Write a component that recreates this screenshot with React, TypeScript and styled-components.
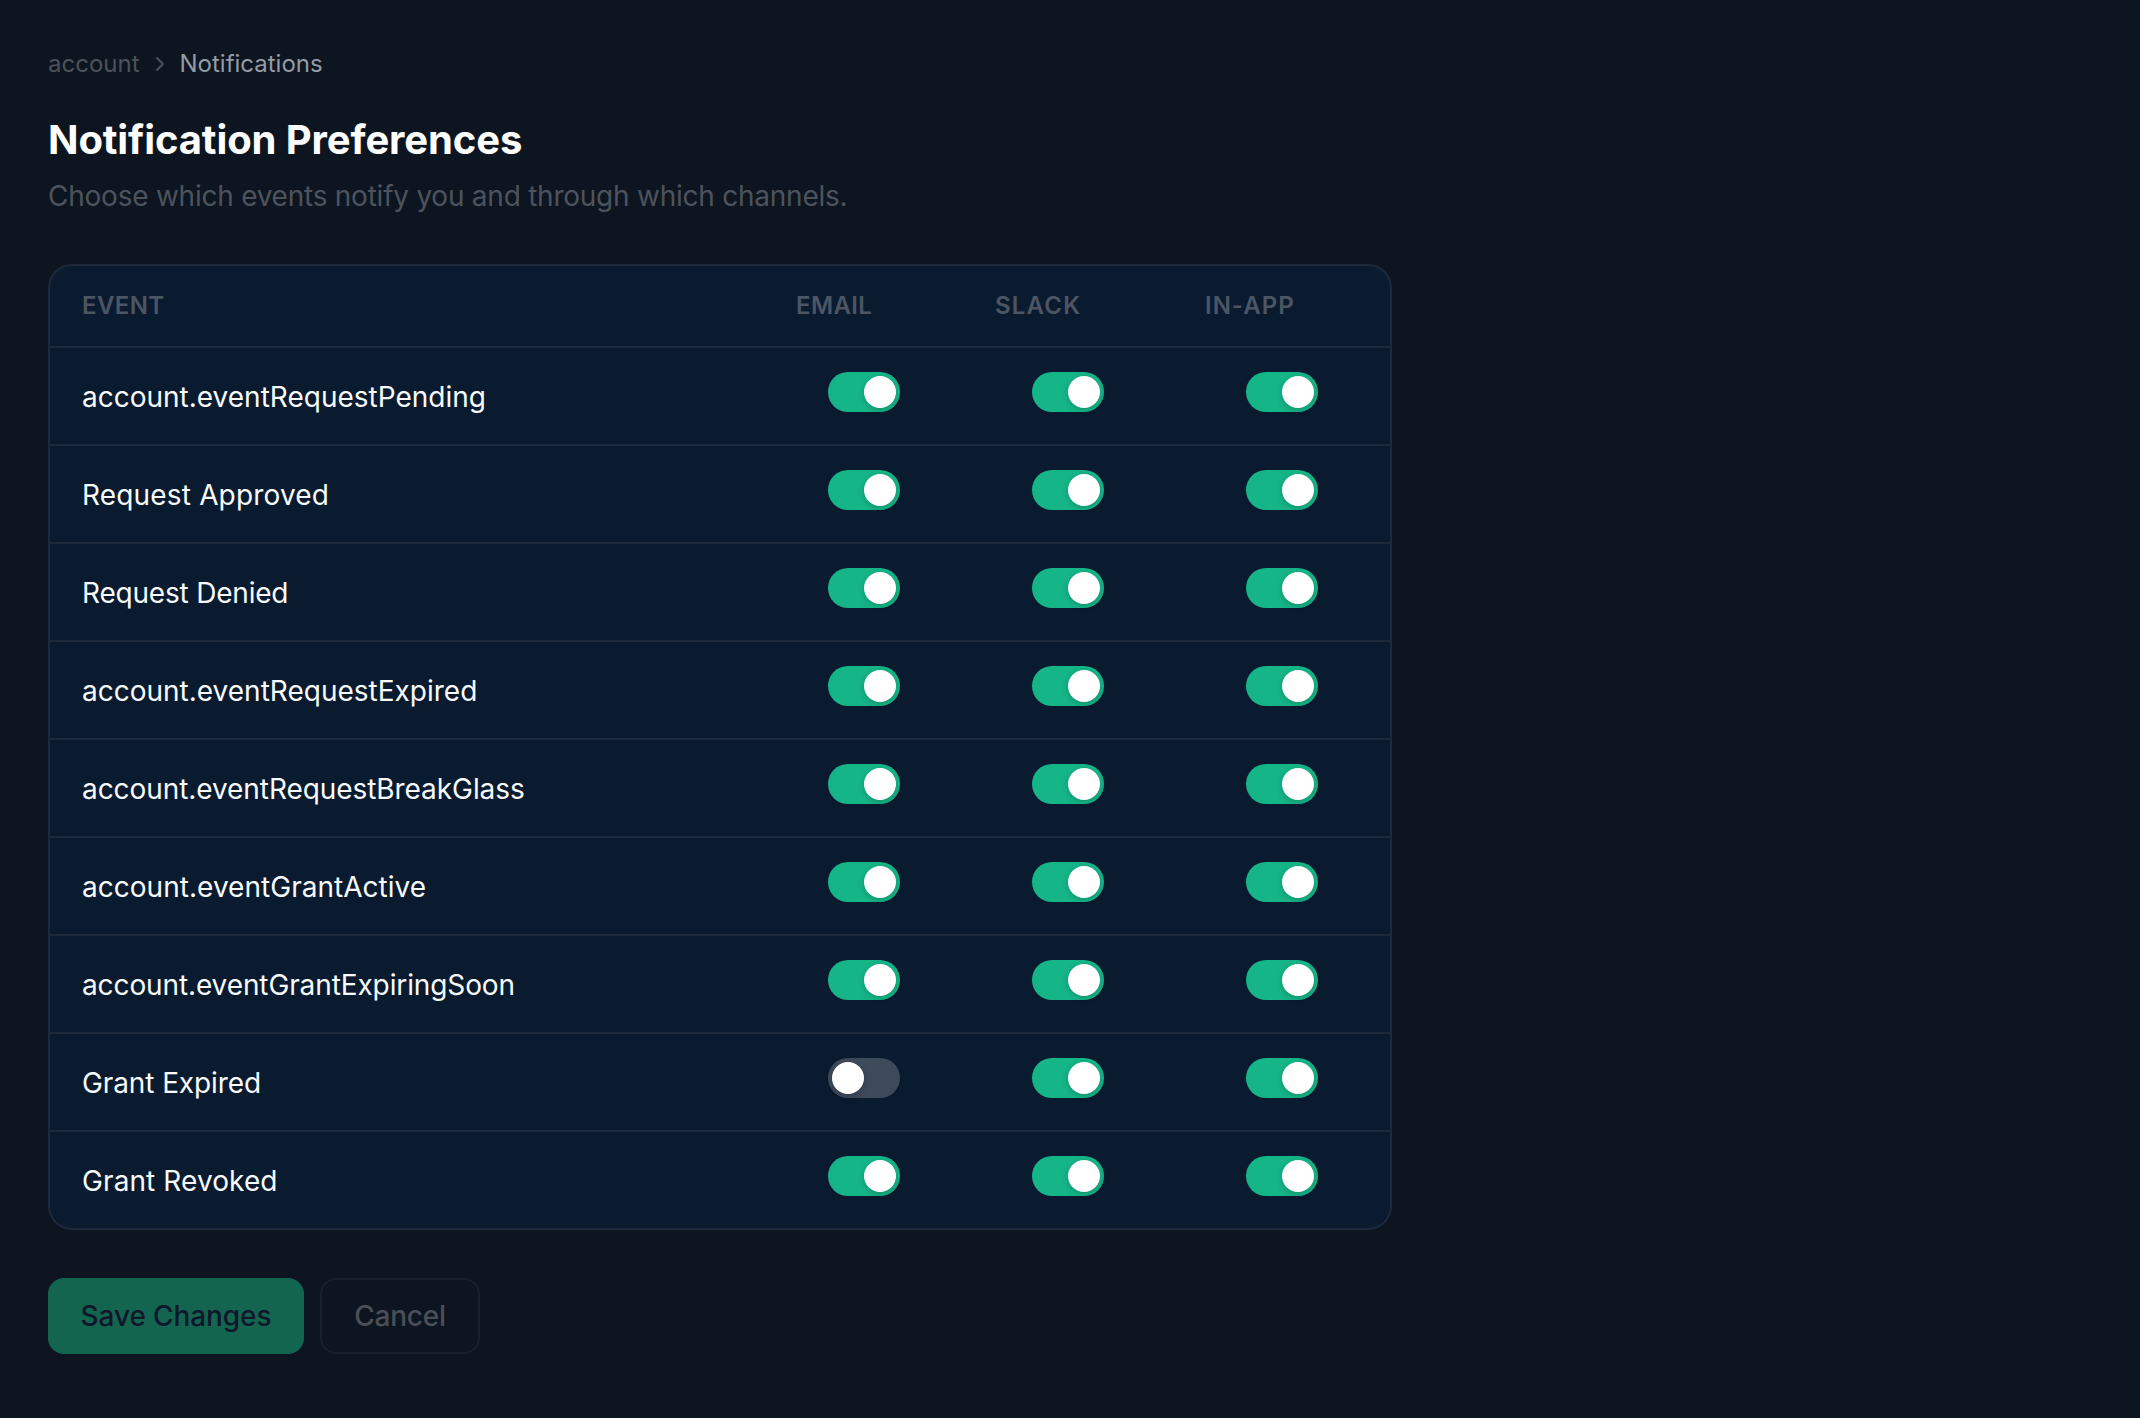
import React from "react";
import styled, { createGlobalStyle } from "styled-components";
import { ChevronRight } from "lucide-react";

const Global = createGlobalStyle`
  html, body { margin: 0; padding: 0; background: #0d1520; }
  body {
    font-family: Inter, "Noto Sans", sans-serif;
  }
`;

const Page = styled.main`
  min-height: 1418px;
  box-sizing: border-box;
  padding: 48px;
  background: #0d1520;
`;

const Breadcrumb = styled.nav`
  display: flex;
  align-items: center;
  gap: 8px;
  height: 32px;
  margin-bottom: 32px;
  font-size: 24px;
  line-height: 32px;
  color: #4d5259;
`;

const Crumb = styled.span`
  color: #949ba6;
`;

const Title = styled.h1`
  margin: 0;
  font-size: 40px;
  line-height: 56px;
  font-weight: 700;
  letter-spacing: -0.11px;
  color: #ffffff;
`;

const Subtitle = styled.p`
  margin: 8px 0 48px;
  font-size: 28px;
  line-height: 40px;
  letter-spacing: -0.24px;
  color: #4d535d;
`;

const Card = styled.section`
  box-sizing: border-box;
  width: 1344px;
  background: #0a1b30;
  border: 2px solid #1e293b;
  border-radius: 24px;
  overflow: hidden;
`;

const Row = styled.div<{ $head?: boolean }>`
  display: grid;
  grid-template-columns: 714px 199px 210px 1fr;
  height: ${(p) => (p.$head ? "80px" : "96px")};
  & + & {
    border-top: 2px solid #1e293b;
  }
`;

const HeadCell = styled.div<{ $spacing: number }>`
  display: flex;
  align-items: center;
  padding: 0 32px 2px;
  font-size: 24px;
  font-weight: 600;
  letter-spacing: ${(p) => p.$spacing}px;
  text-transform: uppercase;
  color: #4b5563;
`;

const EventCell = styled.div<{ $spacing: number }>`
  display: flex;
  align-items: center;
  padding: 1px 32px 0;
  font-size: 28px;
  letter-spacing: ${(p) => p.$spacing}px;
  color: #f8fafc;
`;

const ToggleCell = styled.div`
  display: flex;
  align-items: center;
  justify-content: center;
  padding-bottom: 8px;
`;

const Toggle = styled.span<{ $on: boolean }>`
  display: flex;
  align-items: center;
  justify-content: ${(p) => (p.$on ? "flex-end" : "flex-start")};
  box-sizing: border-box;
  width: 72px;
  height: 40px;
  padding: 4px;
  border-radius: 20px;
  background: ${(p) => (p.$on ? "#15b587" : "#3d4a5a")};
`;

const Knob = styled.span`
  width: 32px;
  height: 32px;
  border-radius: 50%;
  background: #ffffff;
  box-shadow: 0 2px 6px rgba(0, 0, 0, 0.2);
`;

const Actions = styled.div`
  display: flex;
  gap: 16px;
  margin-top: 48px;
`;

const SaveButton = styled.button`
  width: 256px;
  height: 76px;
  padding: 0;
  border: 0;
  border-radius: 16px;
  background: #13654f;
  color: #0f172a;
  font: 500 28px Inter, sans-serif;
  letter-spacing: -0.1px;
`;

const CancelButton = styled.button`
  width: 160px;
  height: 76px;
  padding: 0;
  border: 2px solid #1a202b;
  border-radius: 16px;
  background: transparent;
  color: #4b4f57;
  font: 500 28px Inter, sans-serif;
  letter-spacing: -0.2px;
`;

const columns: [string, number][] = [
  ["Event", 0.4],
  ["Email", 0.4],
  ["Slack", 1.2],
  ["In-App", 1],
];

const events: [string, number, boolean, boolean, boolean][] = [
  ["account.eventRequestPending", 0, true, true, true],
  ["Request Approved", 0.17, true, true, true],
  ["Request Denied", -0.2, true, true, true],
  ["account.eventRequestExpired", 0, true, true, true],
  ["account.eventRequestBreakGlass", -0.07, true, true, true],
  ["account.eventGrantActive", 0.03, true, true, true],
  ["account.eventGrantExpiringSoon", -0.11, true, true, true],
  ["Grant Expired", -0.1, false, true, true],
  ["Grant Revoked", 0.1, true, true, true],
];

export default function App() {
  return (
    <Page>
      <Global />
      <Breadcrumb>
        <span>account</span>
        <ChevronRight size={24} strokeWidth={2} color="#4d5259" />
        <Crumb>Notifications</Crumb>
      </Breadcrumb>
      <Title>Notification Preferences</Title>
      <Subtitle>Choose which events notify you and through which channels.</Subtitle>
      <Card>
        <Row $head>
          {columns.map(([label, spacing]) => (
            <HeadCell key={label} $spacing={spacing}>
              {label}
            </HeadCell>
          ))}
        </Row>
        {events.map(([name, spacing, email, slack, app]) => (
          <Row key={name}>
            <EventCell $spacing={spacing}>{name}</EventCell>
            {[email, slack, app].map((on, i) => (
              <ToggleCell key={i}>
                <Toggle $on={on}>
                  <Knob />
                </Toggle>
              </ToggleCell>
            ))}
          </Row>
        ))}
      </Card>
      <Actions>
        <SaveButton>Save Changes</SaveButton>
        <CancelButton>Cancel</CancelButton>
      </Actions>
    </Page>
  );
}
